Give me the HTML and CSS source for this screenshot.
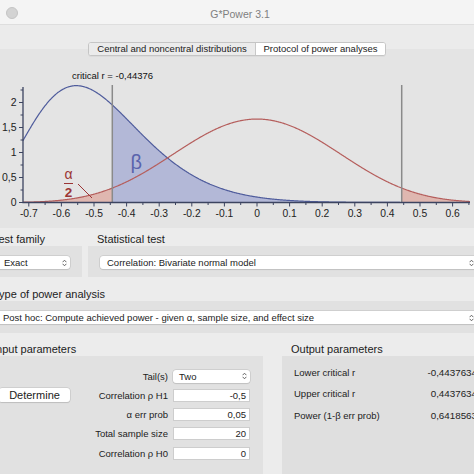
FILE: index.html
```html
<!DOCTYPE html>
<html lang="en">
<head>
<meta charset="utf-8">
<title>G*Power 3.1</title>
<link rel="stylesheet" href="styles.css">
</head>
<body>
<div class="window">
  <header class="titlebar">
    <span class="close"></span>
    <span class="title">G*Power 3.1</span>
    <span></span>
  </header>

  <section class="tabview">
    <div class="segmented">
      <span class="seg">Central and noncentral distributions</span>
      <span class="seg active">Protocol of power analyses</span>
    </div>
    <svg class="chart" viewBox="0 56 474 177" width="474" height="177">
      <path id="fill-red-left" class="fill-red"/>
      <path id="fill-red-right" class="fill-red"/>
      <path id="fill-blue" class="fill-blue"/>
      <path id="curve-blue" class="curve-blue"/>
      <path id="curve-red" class="curve-red"/>
      <line class="crit" x1="112.3" y1="85" x2="112.3" y2="202.5"/>
      <line class="crit" x1="401.7" y1="85" x2="401.7" y2="202.5"/>
      <path class="axis" d="M23 87V202.5H470"/>
      <path class="ticks" d="M28.8 202.5v4M45.1 202.5v2.5M61.4 202.5v4M77.7 202.5v2.5M94 202.5v4M110.3 202.5v2.5M126.6 202.5v4M142.9 202.5v2.5M159.2 202.5v4M175.5 202.5v2.5M191.8 202.5v4M208.1 202.5v2.5M224.4 202.5v4M240.7 202.5v2.5M257 202.5v4M273.3 202.5v2.5M289.6 202.5v4M305.9 202.5v2.5M322.2 202.5v4M338.5 202.5v2.5M354.8 202.5v4M371.1 202.5v2.5M387.4 202.5v4M403.7 202.5v2.5M420 202.5v4M436.3 202.5v2.5M452.6 202.5v4M468.9 202.5v2.5M23 202.5h-4M23 190h-2.5M23 177.5h-4M23 165h-2.5M23 152.5h-4M23 140h-2.5M23 127.5h-4M23 115h-2.5M23 102.5h-4M23 90h-2.5"/>
      <text class="crit-label" x="72" y="79">critical r = -0,44376</text>
      <g class="ylabels">
        <text x="16.5" y="106.2">2</text>
        <text x="16.5" y="131.2">1,5</text>
        <text x="16.5" y="156.2">1</text>
        <text x="16.5" y="181.2">0,5</text>
        <text x="16.5" y="206.2">0</text>
      </g>
      <g class="xlabels">
        <text x="28.8" y="217">-0.7</text>
        <text x="61.4" y="217">-0.6</text>
        <text x="94" y="217">-0.5</text>
        <text x="126.6" y="217">-0.4</text>
        <text x="159.2" y="217">-0.3</text>
        <text x="191.8" y="217">-0.2</text>
        <text x="224.4" y="217">-0.1</text>
        <text x="257" y="217">0</text>
        <text x="289.6" y="217">0.1</text>
        <text x="322.2" y="217">0.2</text>
        <text x="354.8" y="217">0.3</text>
        <text x="387.4" y="217">0.4</text>
        <text x="420" y="217">0.5</text>
        <text x="452.6" y="217">0.6</text>
      </g>
      <text class="beta" x="130.5" y="168.5">β</text>
      <g class="alpha">
        <text x="68.5" y="179">α</text>
        <line x1="64" y1="183.5" x2="73" y2="183.5"/>
        <text class="two" x="68.5" y="197">2</text>
        <line x1="78" y1="184" x2="92" y2="198"/>
      </g>
    </svg>
  </section>

  <div class="lower">
    <div class="row">
      <section class="group family">
        <h2>Test family</h2>
        <div class="panel">
          <div class="select"><span>Exact</span><svg class="chev" viewBox="0 0 5 8" width="5" height="8"><path d="M0.6 3.2L2.5 1.2L4.4 3.2M0.6 4.8L2.5 6.8L4.4 4.8"/></svg></div>
        </div>
      </section>
      <section class="group stattest">
        <h2>Statistical test</h2>
        <div class="panel">
          <div class="select"><span>Correlation: Bivariate normal model</span><svg class="chev" viewBox="0 0 5 8" width="5" height="8"><path d="M0.6 3.2L2.5 1.2L4.4 3.2M0.6 4.8L2.5 6.8L4.4 4.8"/></svg></div>
        </div>
      </section>
    </div>

    <section class="group analysis">
      <h2>Type of power analysis</h2>
      <div class="panel">
        <div class="select"><span>Post hoc: Compute achieved power - given α, sample size, and effect size</span><svg class="chev" viewBox="0 0 5 8" width="5" height="8"><path d="M0.6 3.2L2.5 1.2L4.4 3.2M0.6 4.8L2.5 6.8L4.4 4.8"/></svg></div>
      </div>
    </section>

    <div class="row params">
      <section class="group input">
        <h2>Input parameters</h2>
        <div class="panel input-panel">
          <span class="label r1">Tail(s)</span>
          <div class="select small r1"><span>Two</span><svg class="chev" viewBox="0 0 5 8" width="5" height="8"><path d="M0.6 3.2L2.5 1.2L4.4 3.2M0.6 4.8L2.5 6.8L4.4 4.8"/></svg></div>
          <button class="determine r2">Determine</button>
          <span class="label r2">Correlation ρ H1</span>
          <span class="field r2">-0,5</span>
          <span class="label r3">α err prob</span>
          <span class="field r3">0,05</span>
          <span class="label r4">Total sample size</span>
          <span class="field r4">20</span>
          <span class="label r5">Correlation ρ H0</span>
          <span class="field r5">0</span>
        </div>
      </section>
      <section class="group output">
        <h2>Output parameters</h2>
        <div class="panel output-panel">
          <span class="olabel">Lower critical r</span><span class="ovalue">-0,4437634</span>
          <span class="olabel">Upper critical r</span><span class="ovalue">0,4437634</span>
          <span class="olabel">Power (1-β err prob)</span><span class="ovalue">0,6418563</span>
        </div>
      </section>
    </div>
  </div>
</div>
<script src="script.js"></script>
</body>
</html>
```

FILE: styles.css
```css
* { box-sizing: border-box; margin: 0; padding: 0; }
html, body { width: 474px; height: 474px; overflow: hidden; }
body {
  background: #ececec;
  font-family: "Liberation Sans", Arial, sans-serif;
  font-size: 9.5px;
  color: #222;
}
.window { width: 474px; height: 474px; overflow: hidden; }

/* title bar */
.titlebar {
  height: 25px;
  background: #f4f4f4;
  border-bottom: 1px solid #dedede;
  display: grid;
  grid-template-columns: 1fr auto 1fr;
  align-items: center;
  padding-left: 6px;
}
.close {
  width: 12px; height: 12px; border-radius: 50%;
  background: #d3d3d3; border: 1px solid #c4c4c4;
  justify-self: start;
  margin-top: 2px;
}
.title { font-size: 10.5px; color: #7f7f7f; margin-top: 3px; }

/* tab view with chart */
.tabview {
  height: 208px;
  background: linear-gradient(to bottom, #ebebeb 0, #ebebeb 24px, #e4e4e4 24px, #e4e4e4 203px, #ececec 203px);
  display: flex;
  flex-direction: column;
  align-items: center;
}
.segmented {
  margin-top: 17px;
  width: 298px;
  height: 14px;
  display: flex;
  border: 1px solid #c5c5c5;
  border-radius: 3px;
  overflow: hidden;
  background: #fff;
  box-shadow: 0 1px 0 rgba(0,0,0,0.04);
}
.seg {
  display: flex; align-items: center; justify-content: center;
  font-size: 9.5px; color: #222; line-height: 12px;
}
.seg:first-child { width: 167px; background: #ebebeb; border-right: 1px solid #c8c8c8; }
.seg.active { flex: 1; background: #fff; }

.chart { display: block; width: 474px; height: 177px; }
.fill-blue { fill: #b3b8d7; }
.fill-red { fill: #dfb7b0; }
.curve-blue { fill: none; stroke: #4f5c9c; stroke-width: 1.2; }
.curve-red { fill: none; stroke: #b55e5c; stroke-width: 1.2; }
.crit { stroke: #8a8a8a; stroke-width: 1.5; }
.axis { fill: none; stroke: #3c4460; stroke-width: 1.3; }
.ticks { fill: none; stroke: #3c4460; stroke-width: 1; }
.crit-label { font-size: 9.5px; fill: #111; }
.ylabels text { font-size: 10.5px; fill: #222; text-anchor: end; }
.xlabels text { font-size: 10.3px; fill: #222; text-anchor: middle; }
.beta { font-size: 20px; fill: #5a64ad; }
.alpha text { font-size: 14px; fill: #9b3535; text-anchor: middle; }
.alpha .two { font-size: 13.5px; font-weight: bold; }
.alpha line { stroke: #9b3535; stroke-width: 1; }

/* lower controls */
.lower { margin-left: -16px; width: 505px; }
.row { display: flex; gap: 6px; }
.group h2 {
  font-size: 11px; font-weight: normal; color: #1c1c1c;
  line-height: 13px; height: 13px;
  padding-left: 9px;
}
.panel { background: #e1e1e1; }
.family { width: 98px; }
.stattest { flex: 1; }
.family .panel, .stattest .panel { padding: 10px 12px 8px; }
.analysis { margin-top: 11px; }
.analysis .panel { padding: 10px 12px 9px; }

.select {
  height: 13px;
  background: #fff;
  border-radius: 3px;
  box-shadow: 0 0 0 0.5px #bdbdbd, 0 1px 1px rgba(0,0,0,0.12);
  display: flex; align-items: center; justify-content: space-between;
  padding: 0 3px 0 8px;
  white-space: nowrap;
  overflow: hidden;
  font-size: 9.5px;
}
.stattest .select, .analysis .select { padding-left: 7px; }
.chev { flex: none; }
.chev path { fill: none; stroke: #555; stroke-width: 0.9; }

.params { gap: 19px; margin-top: 10px; }
.input { width: 279px; }
.output { flex: 1; }
.output h2 { padding-left: 9px; }

.input-panel {
  height: 130px;
  padding: 13px 13px 0 15px;
  display: grid;
  grid-template-columns: 71px 1fr 77px;
  grid-template-rows: repeat(5, 14px);
  column-gap: 5px;
  row-gap: 5.3px;
  align-items: center;
}
.r1 { grid-row: 1; }
.r2 { grid-row: 2; }
.r3 { grid-row: 3; }
.r4 { grid-row: 4; }
.r5 { grid-row: 5; }
.label { grid-column: 2; text-align: right; white-space: nowrap; font-size: 9.5px; color: #222; }
.field, .select.small { grid-column: 3; }
.field {
  height: 13px;
  background: #fff;
  border: 1px solid #cdcdcd;
  text-align: right;
  padding-right: 3px;
  line-height: 11px;
  font-size: 9.5px;
}
.select.small { padding-left: 6px; }
.determine {
  grid-column: 1;
  height: 14px;
  background: #fff;
  border: none;
  border-radius: 3px;
  box-shadow: 0 0 0 0.5px #bdbdbd, 0 1px 1px rgba(0,0,0,0.15);
  font-family: "Liberation Sans", Arial, sans-serif;
  font-size: 11px;
  color: #222;
  line-height: 14px;
}

.output-panel {
  height: 130px;
  padding: 9px 12px 0 12px;
  display: grid;
  grid-template-columns: 1fr auto;
  grid-auto-rows: 14px;
  row-gap: 7.5px;
  align-content: start;
  align-items: center;
  background: #dfdfdf;
}
.olabel { font-size: 9.5px; color: #222; white-space: nowrap; }
.ovalue { font-size: 9.8px; color: #222; text-align: right; white-space: nowrap; }
```

FILE: script.js
```js
(function () {
  var X0 = 257, SX = 326, Y0 = 202.5, SY = 50, N = 20;
  var RMIN = (23 - X0) / SX, RMAX = (470 - X0) / SX, RC = 0.44376;

  function hyp(z) {
    var c = N - 0.5, term = 1, sum = 1;
    for (var k = 0; k < 400; k++) {
      term *= (0.5 + k) * (0.5 + k) / ((c + k) * (k + 1)) * z;
      sum += term;
      if (term < 1e-14) break;
    }
    return sum;
  }
  function shape(r, rho) {
    return Math.pow(1 - r * r, (N - 4) / 2) / Math.pow(1 - rho * r, N - 1.5) * hyp((1 + rho * r) / 2);
  }
  function density(rho) {
    var steps = 4000, s = 0;
    for (var i = 1; i < steps; i++) s += shape(-1 + 2 * i / steps, rho);
    var norm = s * 2 / steps;
    return function (r) { return shape(r, rho) / norm; };
  }
  function px(r) { return X0 + SX * r; }
  function py(d) { return Y0 - SY * d; }
  function pts(f, a, b) {
    var n = Math.max(2, Math.ceil((b - a) / 0.002)), out = [];
    for (var i = 0; i <= n; i++) {
      var r = a + (b - a) * i / n;
      out.push(px(r).toFixed(2) + ' ' + py(f(r)).toFixed(2));
    }
    return out;
  }
  function curve(f, a, b) { return 'M' + pts(f, a, b).join('L'); }
  function area(f, a, b) {
    return 'M' + px(a).toFixed(2) + ' ' + Y0 + 'L' + pts(f, a, b).join('L') + 'L' + px(b).toFixed(2) + ' ' + Y0 + 'Z';
  }
  function set(id, d) { var el = document.getElementById(id); if (el) el.setAttribute('d', d); }

  var h1 = density(-0.5), h0 = density(0);
  set('fill-blue', area(h1, -RC, RMAX));
  set('fill-red-left', area(h0, RMIN, -RC));
  set('fill-red-right', area(h0, RC, RMAX));
  set('curve-blue', curve(h1, RMIN, RMAX));
  set('curve-red', curve(h0, RMIN, RMAX));
})();
```
